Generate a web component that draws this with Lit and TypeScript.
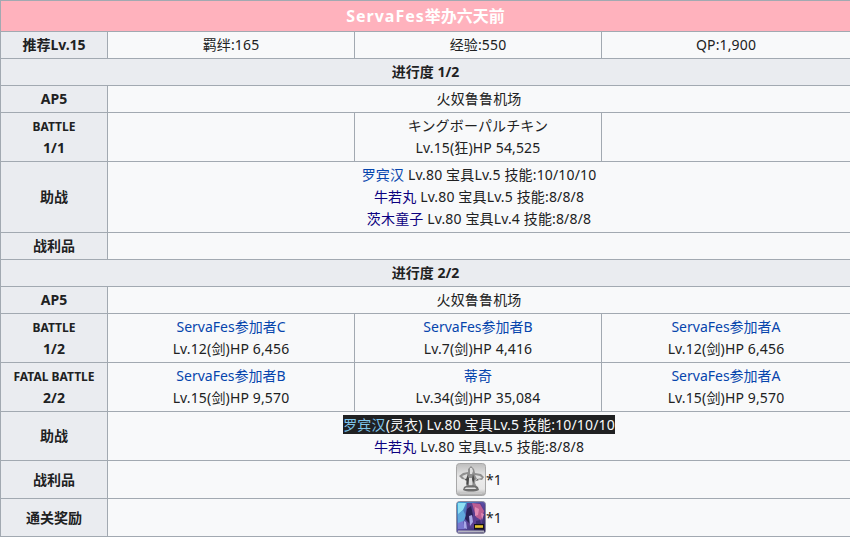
import { LitElement, html, css, svg } from "lit";
import { customElement } from "lit/decorators.js";

const silver = svg`<svg class="ico" viewBox="0 0 30 33" width="30" height="33">
  <defs><linearGradient id="s" x1="0" y1="0" x2="0" y2="1"><stop offset="0" stop-color="#bdbdbd"/><stop offset=".45" stop-color="#ececec"/><stop offset=".8" stop-color="#e6e6e6"/><stop offset="1" stop-color="#a8a8a8"/></linearGradient></defs>
  <rect x=".5" y=".5" width="29" height="32" rx="3" fill="url(#s)" stroke="#a8a8a8"/>
  <path d="M12 6l3-3 3 3 1 4 6 1 3 3-2 3-6-1-1 4 2 4-4 1h-5l-2-3 1-5-5-1-3-3 4-3 5-1z" fill="#8f8f8f"/>
  <path d="M14 5h2l1 3-1 3h-2zM6 13l5-2 2 3-4 2zM19 12l5 1 2 2-5 1zM13 15h3l1 4-1 4h-3z" fill="#dedede"/>
  <path d="M12 11l1 5-1 6-1.500-1 0-6zM17 11l1.500 5-1.500 5-1-5zM9 16l2 0-1 2zM21 16l2 1-3 1z" fill="#4a4a4a"/>
  <path d="M8 24c3-2.500 11-2.500 14 0l1 3c-4 2-12 2-16 0z" fill="#6e6e6e"/>
  <path d="M10 24.500h9l1.500 1.500h-12z" fill="#e0e0e0"/>
  <rect x="4" y="29.500" width="22" height="1.500" fill="#c8c8c8"/>
</svg>`;

const card = svg`<svg class="ico" viewBox="0 0 30 33" width="30" height="33">
  <defs><linearGradient id="c" x1="0" y1="0" x2="1" y2="1"><stop offset="0" stop-color="#38b4e0"/><stop offset=".5" stop-color="#5a4aa0"/><stop offset="1" stop-color="#2a2050"/></linearGradient></defs>
  <rect x=".5" y=".5" width="29" height="32" rx="3" fill="url(#c)" stroke="#8a8aa0"/>
  <path d="M2 2h8L7 9l-5 5z" fill="#8fe0f2"/>
  <path d="M2 13l5-4 3 6-3 6-5 2z" fill="#5fa8dc"/>
  <path d="M2 22l5-2 2 8H2z" fill="#7a78d0"/>
  <path d="M11 2h14l3 8-2 12-8 6-7-4-1-11z" fill="#5a3f90"/>
  <path d="M16 2l8 1 4 7-3 9-5-3-2-7z" fill="#bc5e92"/>
  <path d="M19 6l4 2-1 6-3 1zM25 12l3 1-2 6z" fill="#e08ab4"/>
  <path d="M11 8l4-3 2 9-3 9-5-5z" fill="#2a2258"/>
  <path d="M13 15l3-1 1 7-3 4zM8 20l2 1 1 7-3-1z" fill="#a9a8e6"/>
  <path d="M20 20l4-1 1 4-5 1z" fill="#3c2c70"/>
  <path d="M18 23h10v5.500H18z" fill="#14121c"/><path d="M19 24.200h8v2.600h-8z" fill="#e8c632"/>
  <rect x="2" y="29.500" width="26" height="2" fill="#b4b4c0"/>
</svg>`;

@customElement("app-root")
export class AppRoot extends LitElement {
  static styles = css`
    :host { display: block; width: 850px; font: 14px/22px "Noto Sans", "Noto Sans CJK SC", sans-serif; color: #202122; }
    table { width: 850px; table-layout: fixed; border-collapse: collapse; background: #f8f9fa; }
    td, th { border: 1px solid #a2a9b1; padding: 2px 5px; text-align: center; vertical-align: middle; overflow: hidden; white-space: nowrap; }
    td { letter-spacing: .15px; }
    tr { height: 27px; }
    tr.two { height: 49px; }
    tr.three { height: 71px; }
    tr.pic { height: 38px; }
    th { background: #eaecf0; font-weight: 700; }
    th.title { background: #ffb2bd; color: #fff; font-size: 16px; line-height: 26px; }
    .latin { letter-spacing: 1px; }
    .small { font-size: 12px; line-height: 1; }
    a { color: #0645ad; text-decoration: none; }
    a.v { color: #0b0080; }
    a.wide { letter-spacing: 0; }
    .dark { background: #202122; color: #f8f9fa; }
    .dark a { color: #7ec4ea; }
    td.img { padding: 2px 5px; line-height: 0; }
    .pair { display: inline-flex; align-items: center; font: 14px/22px "Noto Sans", "Noto Sans CJK SC", sans-serif; }
    .ico { display: block; }
  `;

  private battle(label: string, count: string) {
    return html`<th><span class="small">${label}</span><br />${count}</th>`;
  }

  render() {
    return html`<table>
      <colgroup><col style="width:107px" /><col style="width:247px" /><col style="width:247px" /><col style="width:249px" /></colgroup>
      <tr><th class="title" colspan="4"><span class="latin">ServaFes</span>举办六天前</th></tr>
      <tr><th>推荐Lv.15</th><td>羁绊:165</td><td>经验:550</td><td>QP:1,900</td></tr>
      <tr><th colspan="4">进行度 1/2</th></tr>
      <tr><th>AP5</th><td colspan="3">火奴鲁鲁机场</td></tr>
      <tr class="two">${this.battle("BATTLE", "1/1")}<td></td><td>キングボーパルチキン<br />Lv.15(狂)HP 54,525</td><td></td></tr>
      <tr class="three"><th>助战</th><td colspan="3"><a href="#">罗宾汉</a> Lv.80 宝具Lv.5 技能:10/10/10<br /><a class="v" href="#">牛若丸</a> Lv.80 宝具Lv.5 技能:8/8/8<br /><a class="v" href="#">茨木童子</a> Lv.80 宝具Lv.4 技能:8/8/8</td></tr>
      <tr><th>战利品</th><td colspan="3"></td></tr>
      <tr><th colspan="4">进行度 2/2</th></tr>
      <tr><th>AP5</th><td colspan="3">火奴鲁鲁机场</td></tr>
      <tr class="two">${this.battle("BATTLE", "1/2")}<td><a class="wide" href="#">ServaFes参加者C</a><br />Lv.12(剑)HP 6,456</td><td><a class="wide" href="#">ServaFes参加者B</a><br />Lv.7(剑)HP 4,416</td><td><a class="wide" href="#">ServaFes参加者A</a><br />Lv.12(剑)HP 6,456</td></tr>
      <tr class="two">${this.battle("FATAL BATTLE", "2/2")}<td><a class="wide" href="#">ServaFes参加者B</a><br />Lv.15(剑)HP 9,570</td><td><a href="#">蒂奇</a><br />Lv.34(剑)HP 35,084</td><td><a class="wide" href="#">ServaFes参加者A</a><br />Lv.15(剑)HP 9,570</td></tr>
      <tr class="two"><th>助战</th><td colspan="3"><span class="dark"><a href="#">罗宾汉</a>(灵衣) Lv.80 宝具Lv.5 技能:10/10/10</span><br /><a class="v" href="#">牛若丸</a> Lv.80 宝具Lv.5 技能:8/8/8</td></tr>
      <tr class="pic"><th>战利品</th><td class="img" colspan="3"><span class="pair">${silver}*1</span></td></tr>
      <tr class="pic"><th>通关奖励</th><td class="img" colspan="3"><span class="pair">${card}*1</span></td></tr>
    </table>`;
  }
}
